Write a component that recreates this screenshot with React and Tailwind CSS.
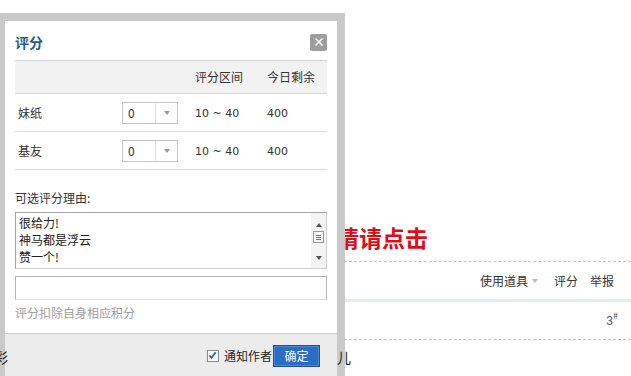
import { X } from 'lucide-react'

const font = { fontFamily: '"Noto Sans CJK SC", "Liberation Sans", sans-serif' }
const digits = { fontFamily: '"DejaVu Sans", "Liberation Sans", sans-serif' }

function Select() {
  return (
    <div className="flex h-[22px] w-[56px] border border-[#c4c4c4] bg-white">
      <span className="flex-1 pl-[5px] text-[12px] leading-[20px] text-[#333]">0</span>
      <span className="flex w-[22px] items-center justify-center border-l border-[#e2e2e2]">
        <span className="h-0 w-0 border-x-[3px] border-t-[4px] border-x-transparent border-t-[#9a9a9a]" />
      </span>
    </div>
  )
}

function Row({ name }) {
  return (
    <div className="grid h-[38px] grid-cols-[107px_73px_72px_1fr] items-center border-b border-[#d9d9d9] text-[12px] text-[#333]">
      <span className="pl-[3px]">{name}</span>
      <Select />
      <span className="pt-[3px] text-[11px]" style={digits}>10 ~ 40</span>
      <span className="pt-[3px] text-[11px]" style={digits}>400</span>
    </div>
  )
}

function ScrollBar() {
  return (
    <div className="flex w-[15px] flex-col items-center bg-[#f4f4f4]">
      <div className="flex h-[14px] items-end justify-center">
        <span className="h-0 w-0 border-x-[3px] border-b-[4px] border-x-transparent border-b-[#555]" />
      </div>
      <div className="mt-[4px] flex h-[12px] w-[11px] flex-col justify-center gap-[1px] border border-[#999] bg-[#f8f8f8] px-[2px]">
        <span className="h-px bg-[#777]" />
        <span className="h-px bg-[#777]" />
        <span className="h-px bg-[#777]" />
      </div>
      <div className="flex-1" />
      <div className="flex h-[12px] items-start justify-center">
        <span className="h-0 w-0 border-x-[3px] border-t-[4px] border-x-transparent border-t-[#555]" />
      </div>
    </div>
  )
}

function Dialog() {
  return (
    <div className="absolute left-[-3px] top-[13px] w-[348px] border-[8px] border-b-0 border-[#c9c9c9]">
      <div className="bg-white">
        <div className="flex items-center justify-between px-[10px] pt-[12px] pb-[9px]">
          <h3 className="text-[14px] font-bold leading-[18px] text-[#2a5a86]">评分</h3>
          <button className="flex h-[17px] w-[17px] items-center justify-center rounded-[2px] bg-[#9d9d9d]">
            <X className="h-[12px] w-[12px] text-white" strokeWidth={3.5} />
          </button>
        </div>
        <div className="mx-[10px] border-t border-[#d4d4d4]">
          <div className="grid h-[33px] grid-cols-[107px_73px_72px_1fr] items-center border-b border-[#d9d9d9] bg-[#f2f2f2] text-[12px] text-[#333]">
            <span />
            <span />
            <span>评分区间</span>
            <span>今日剩余</span>
          </div>
          <Row name="妹纸" />
          <Row name="基友" />
        </div>
        <div className="px-[10px] pt-[19px] pb-[4px]">
          <p className="text-[12px] leading-[18px] text-[#333]">可选评分理由:</p>
          <div className="mt-[5px] flex h-[57px] border border-[#a5a5a5] border-r-[#d0d0d0] border-b-[#d0d0d0]">
            <div className="flex-1 pl-[3px] pt-[1px] text-[12px] leading-[17px] text-[#222]">
              <div>很给力!</div>
              <div>神马都是浮云</div>
              <div>赞一个!</div>
            </div>
            <ScrollBar />
          </div>
          <div className="mt-[7px] h-[24px] border border-[#b5b5b5] border-b-[#dcdcdc]" />
          <p className="pt-[4px] text-[12px] leading-[18px] text-[#a0a0a0]">评分扣除自身相应积分</p>
        </div>
        <div className="mt-[7px] flex h-[47px] items-center justify-end gap-[1px] border-t border-[#cfcfcf] bg-[#ececec] pr-[17px] pb-[3px]">
          <span className="mr-[4px] flex h-[12px] w-[12px] items-center justify-center border border-[#8a8a8a] bg-[#f4f4f4]">
            <svg viewBox="0 0 10 10" className="h-[9px] w-[9px]">
              <path d="M1.5 5 L4 7.5 L8.5 1.5" fill="none" stroke="#3b5a8a" strokeWidth="1.8" />
            </svg>
          </span>
          <span className="text-[12px] text-[#222]">通知作者</span>
          <button className="h-[22px] w-[47px] border border-[#1c4f94] bg-[#2b6cc4] text-[12px] text-white shadow-[inset_0_0_0_1px_#4c8ad8]">
            确定
          </button>
        </div>
      </div>
    </div>
  )
}

export default function App() {
  return (
    <div className="relative h-[376px] w-[631px] overflow-hidden bg-white" style={font}>
      <div className="pt-[222px]">
        <div className="pl-[313px] text-[23px] font-bold leading-[30px] text-[#e30b17]">事请请点击</div>
        <div className="mt-[9px] border-t border-dashed border-[#c6c6c6]" />
        <div className="flex h-[37px] items-center justify-end gap-[12px] pr-[17px] text-[12px] text-[#333]">
          <span className="flex items-center gap-[4px]">
            使用道具
            <span className="h-0 w-0 border-x-[3px] border-t-[4px] border-x-transparent border-t-[#bbb]" />
          </span>
          <span className="ml-[4px]">评分</span>
          <span>举报</span>
        </div>
        <div className="h-[3px] bg-[#e6ecf1]" />
        <div className="flex h-[37px] items-center justify-end pr-[13px] text-[12px] text-[#555]">
          <span style={{ fontFamily: '"Liberation Sans", sans-serif' }}>3</span>
          <sup className="text-[9px]">#</sup>
        </div>
        <div className="border-t border-dashed border-[#c6c6c6]" />
      </div>
      <Dialog />
      <div className="relative z-10 flex pt-[7px] text-[14px] leading-[20px] text-[#222]">
        <span className="ml-[-6px] w-[343px]">彩</span>
        <span>儿</span>
      </div>
    </div>
  )
}
